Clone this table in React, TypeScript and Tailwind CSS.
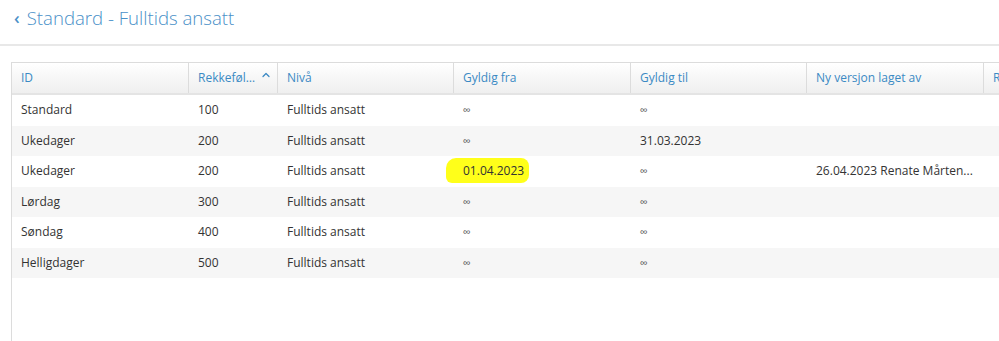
import { ChevronUp } from 'lucide-react'

type Row = {
  id: string
  order: number
  level: string
  from: string
  to: string
  by: string
  highlight?: boolean
}

const ROWS: Row[] = [
  { id: 'Standard', order: 100, level: 'Fulltids ansatt', from: '∞', to: '∞', by: '' },
  { id: 'Ukedager', order: 200, level: 'Fulltids ansatt', from: '∞', to: '31.03.2023', by: '' },
  { id: 'Ukedager', order: 200, level: 'Fulltids ansatt', from: '01.04.2023', to: '∞', by: '26.04.2023 Renate Mårten...', highlight: true },
  { id: 'Lørdag', order: 300, level: 'Fulltids ansatt', from: '∞', to: '∞', by: '' },
  { id: 'Søndag', order: 400, level: 'Fulltids ansatt', from: '∞', to: '∞', by: '' },
  { id: 'Helligdager', order: 500, level: 'Fulltids ansatt', from: '∞', to: '∞', by: '' },
]

const COLS = 'grid grid-cols-[177px_89px_176px_177px_176px_177px_1fr]'

function Cell({ value }: { value: string }) {
  if (value === '∞') return <span className="text-[11px] text-[#555]">∞</span>
  return <span>{value}</span>
}

export default function App() {
  return (
    <div className="w-[999px] h-[341px] overflow-hidden bg-white font-['Open_Sans',sans-serif]">
      {/* Header */}
      <div className="h-[46px] flex items-center pl-[14px] border-b-2 border-[#e8e8e8]">
        <span className="text-[#4a90c8] text-[17px] font-semibold mr-[7px] -mt-[8px]">‹</span>
        <h1 className="text-[#4a90c8] text-[18.6px] font-light -mt-[8px]">Standard - Fulltids ansatt</h1>
      </div>

      {/* Table */}
      <div className="ml-[11px] mt-[16px] h-[300px] border-l border-t border-[#dcdcdc] text-[12px] text-[#333]">
        <div className={`${COLS} h-[32px] bg-gradient-to-b from-white to-[#efefef] border-b-2 border-[#e4e4e4] text-[#3b8ac4]`}>
          {['ID', 'Rekkeføl…', 'Nivå', 'Gyldig fra', 'Gyldig til', 'Ny versjon laget av', 'R'].map((h, i) => (
            <div key={i} className="flex items-center pl-[9px] border-r border-[#dcdcdc] last:border-r-0">
              {h}
              {i === 1 && <ChevronUp className="w-[12px] h-[12px] ml-[5px] -mt-[6px] text-[#3b8ac4]" strokeWidth={2.5} />}
            </div>
          ))}
        </div>
        {ROWS.map((r, i) => (
          <div key={i} className={`${COLS} h-[30.5px] items-center ${i % 2 === 1 ? 'bg-[#f6f6f6]' : 'bg-white'}`}>
            <div className="pl-[9px]">{r.id}</div>
            <div className="pl-[9px]">{r.order}</div>
            <div className="pl-[9px]">{r.level}</div>
            <div className="pl-[9px]">
              {r.highlight ? (
                <span className="-ml-[17px] pl-[17px] pr-[5px] py-[4px] bg-[#ffff1a] rounded-tl-[10px] rounded-bl-[6px] rounded-r-[8px]">{r.from}</span>
              ) : (
                <Cell value={r.from} />
              )}
            </div>
            <div className="pl-[9px]">
              <Cell value={r.to} />
            </div>
            <div className="pl-[9px] whitespace-nowrap">{r.by}</div>
            <div />
          </div>
        ))}
      </div>
    </div>
  )
}
